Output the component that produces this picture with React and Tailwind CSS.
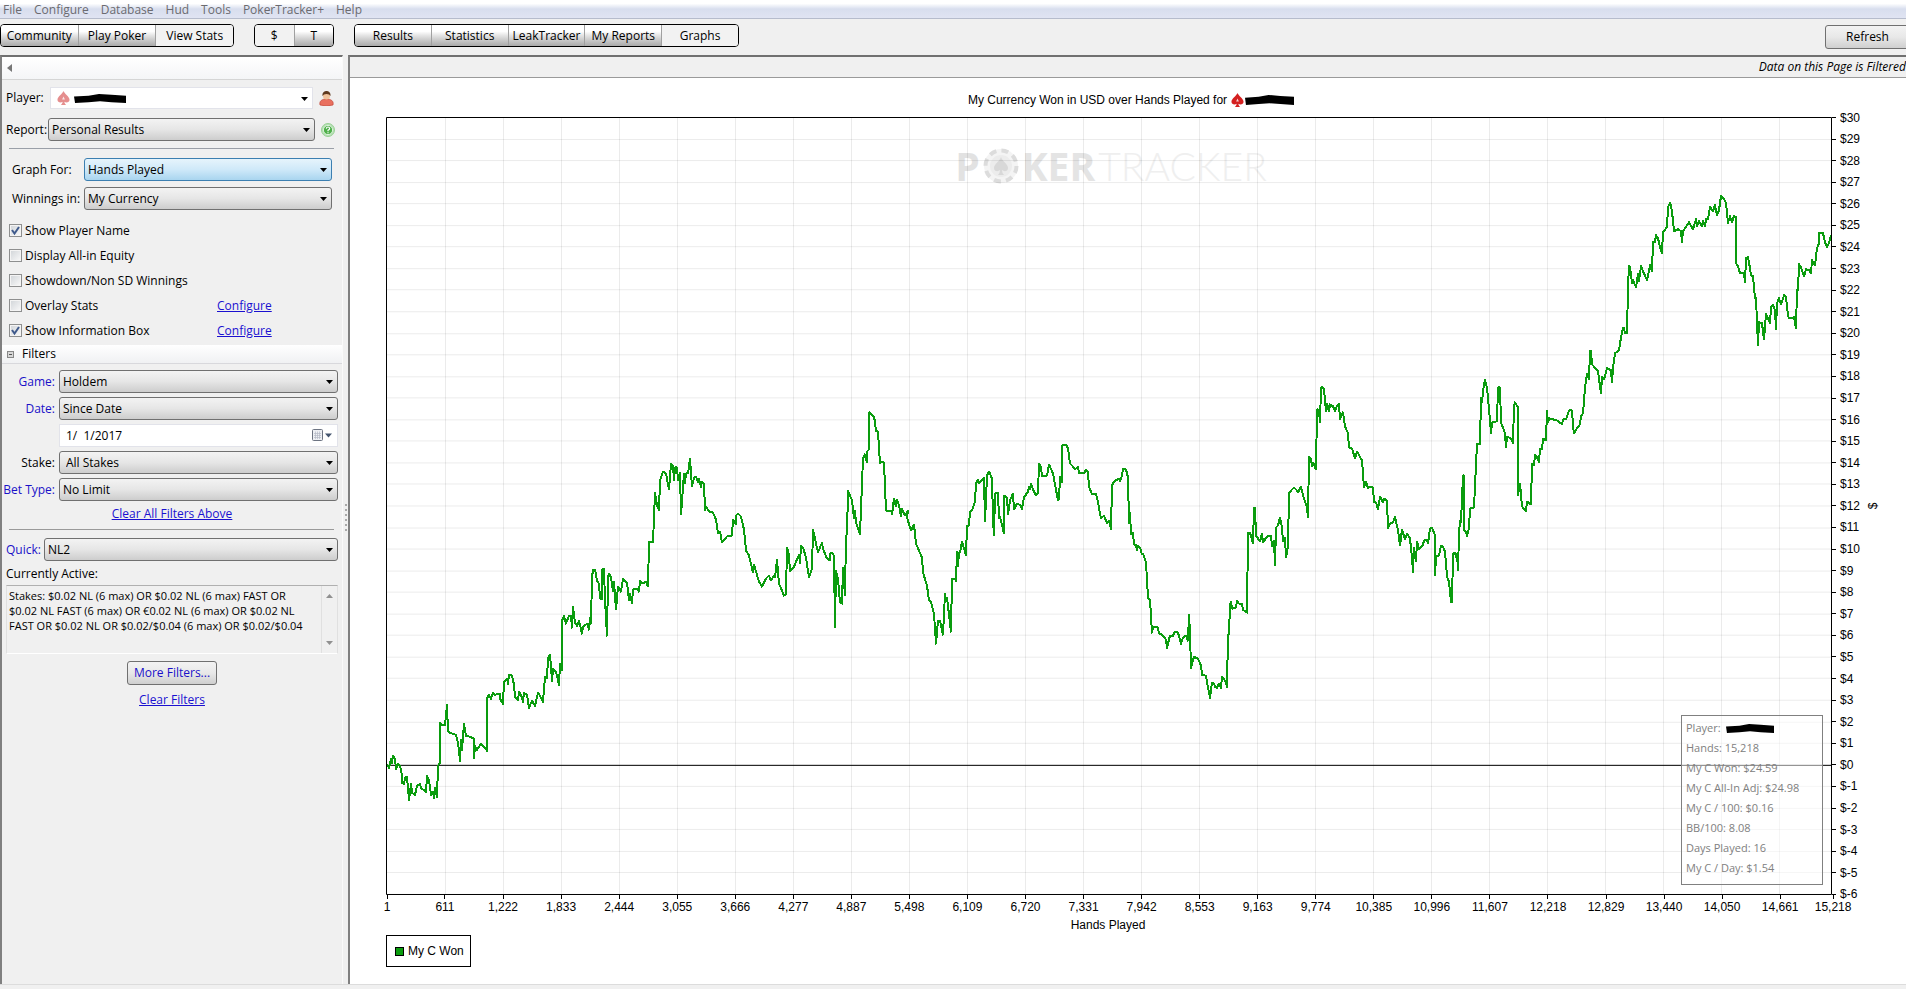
import React from "react";

const menu = ["File", "Configure", "Database", "Hud", "Tools", "PokerTracker+", "Help"];

const yTicks = Array.from({ length: 37 }, (_, i) => 30 - i);
const xTicks = [
    1, 611, 1222, 1833, 2444, 3055, 3666, 4277, 4887, 5498, 6109, 6720, 7331, 7942,
    8553, 9163, 9774, 10385, 10996, 11607, 12218, 12829, 13440, 14050, 14661, 15218,
];

const winnings = `387,764 389,767 391,758 392,762 393,755 395,758 396,768 398,763 400,765 402,775 402,782 404,783 405,777 407,776
409,799 411,783 412,792 415,794 417,785 420,783 421,787 426,791 427,775 429,779 431,794 433,791 434,797 435,787 437,796
438,765 440,762 440,722 442,724 445,724 447,704 448,730 450,732 456,734 458,742 460,760 461,739 462,749 464,723 466,735
470,736 474,738 474,757 475,745 477,749 481,743 485,747 487,750 487,698 489,694 491,698 493,692 495,694 500,693 500,698
503,703 504,681 507,678 508,683 509,674 512,675 514,684 515,696 518,699 519,691 521,694 523,701 524,692 527,694 529,707
532,700 535,705 538,692 540,695 543,701 545,676 547,677 548,658 550,654 552,680 553,668 556,671 559,684 560,663 562,669
562,620 564,615 566,623 569,615 571,615 572,627 573,606 575,622 577,625 579,620 582,633 583,626 587,623 589,629 590,617
591,623 592,577 593,569 595,569 597,580 599,583 600,597 602,599 602,569 604,568 605,600 607,635 608,577 609,573 611,577
613,591 614,581 616,609 618,586 621,591 623,578 627,582 629,600 630,593 632,603 633,589 637,588 639,591 640,580 643,583
646,581 648,586 649,541 653,542 655,492 657,505 659,510 660,480 663,471 666,473 669,489 671,463 673,465 674,480 675,467
677,467 678,480 680,472 681,514 683,487 684,473 685,483 686,473 688,473 690,458 692,486 694,477 696,476 698,482 699,478
701,487 702,481 704,483 705,510 706,506 709,511 713,512 716,519 718,533 720,531 722,542 727,536 732,535 733,519 736,524
736,515 738,513 741,516 744,529 746,550 749,555 753,572 754,564 756,571 759,581 762,586 766,578 769,575 771,580 774,575
775,577 777,559 779,583 782,590 784,595 786,593 787,547 789,555 790,571 794,566 799,554 800,563 801,545 803,547 806,557
809,577 812,568 813,529 818,552 822,542 823,548 827,558 830,560 830,553 832,552 834,555 835,627 836,570 838,578 840,602
842,603 843,567 845,595 846,535 847,534 848,490 852,500 854,518 855,510 856,522 860,534 863,458 865,454 867,462 867,451
869,449 869,413 870,412 874,417 875,421 876,431 878,431 880,463 881,461 884,462 886,510 892,511 892,514 894,498 896,506
897,499 899,505 901,516 902,508 905,515 908,510 907,517 911,530 914,524 916,543 922,557 923,572 927,585 929,600 931,601
934,613 936,643 938,620 940,620 943,634 945,593 946,600 947,597 951,631 952,578 955,578 956,581 957,551 958,566 959,552
960,552 962,541 966,555 967,525 969,525 970,511 972,510 975,501 976,483 978,479 979,483 984,477 985,521 987,475 989,471
992,478 993,519 994,535 995,493 998,492 999,518 1000,516 1004,533 1004,495 1007,497 1008,514 1010,500 1013,493 1014,509
1017,503 1021,505 1022,509 1024,497 1028,491 1029,486 1030,489 1031,483 1033,489 1036,495 1038,492 1039,463 1041,467
1042,476 1047,475 1049,464 1053,473 1058,500 1059,499 1060,476 1062,482 1062,445 1064,445 1066,444 1068,448 1070,463
1073,466 1075,469 1078,466 1079,473 1084,473 1086,469 1088,472 1089,486 1092,494 1096,493 1098,502 1101,518 1104,515
1107,523 1109,520 1111,529 1112,485 1114,481 1119,478 1120,481 1122,475 1123,468 1126,469 1128,477 1129,523 1130,512
1131,534 1133,532 1134,544 1136,544 1137,550 1138,545 1140,547 1142,554 1143,553 1146,562 1148,597 1150,599 1152,632
1153,627 1156,626 1158,627 1159,633 1162,634 1166,639 1167,647 1170,635 1173,635 1175,631 1178,632 1181,643 1183,637
1186,635 1188,640 1189,614 1190,633 1191,667 1194,656 1198,658 1201,665 1202,674 1206,675 1208,687 1210,697 1212,682
1214,683 1215,686 1217,687 1219,683 1221,687 1222,676 1225,680 1227,686 1228,635 1229,633 1230,605 1231,601 1232,608
1236,607 1237,600 1239,603 1242,603 1243,609 1247,612 1248,532 1250,532 1253,543 1254,507 1255,507 1256,535 1260,541
1262,533 1263,542 1267,536 1271,535 1272,546 1274,540 1275,565 1276,527 1278,525 1280,517 1282,527 1283,541 1285,537
1286,557 1288,545 1289,493 1291,490 1294,487 1297,490 1298,492 1301,486 1303,495 1307,507 1308,517 1309,456 1311,458
1312,466 1313,462 1316,469 1317,409 1319,410 1320,422 1321,388 1322,387 1324,389 1326,411 1327,403 1329,411 1330,404
1333,406 1335,411 1337,405 1339,404 1340,419 1343,412 1345,426 1348,433 1349,447 1352,448 1355,458 1357,451 1362,460
1364,487 1366,481 1368,488 1369,486 1373,487 1374,502 1376,502 1378,509 1380,496 1383,502 1384,498 1387,500 1388,528
1390,523 1393,522 1395,516 1398,530 1400,545 1402,529 1405,539 1407,533 1410,538 1412,557 1413,572 1414,547 1416,561
1417,541 1419,549 1423,544 1424,540 1427,539 1428,543 1430,528 1432,527 1435,535 1435,575 1436,556 1439,555 1441,545
1443,546 1445,551 1447,576 1449,581 1451,601 1452,602 1453,553 1455,552 1456,557 1457,553 1458,570 1459,533 1460,520
1461,522 1463,475 1464,475 1464,530 1466,531 1467,536 1469,527 1470,508 1474,507 1477,443 1480,444 1481,397 1482,402
1484,383 1485,380 1487,387 1490,420 1491,433 1492,422 1497,421 1498,387 1500,387 1501,422 1505,433 1506,447 1507,436
1511,438 1513,443 1514,405 1515,402 1518,407 1518,495 1520,483 1522,506 1526,511 1527,501 1531,504 1532,463 1534,465
1535,454 1537,457 1539,462 1540,448 1542,449 1543,438 1546,440 1547,410 1548,422 1549,418 1557,420 1562,424 1563,419
1566,419 1569,410 1572,410 1573,425 1574,433 1577,428 1580,424 1581,416 1583,413 1585,387 1587,374 1589,379 1590,351
1591,351 1592,364 1598,371 1601,393 1602,377 1604,379 1607,368 1611,370 1612,382 1613,367 1615,353 1619,350 1621,337
1623,328 1624,328 1625,333 1627,333 1628,287 1629,266 1630,267 1632,283 1633,280 1636,287 1638,274 1639,281 1641,266
1643,271 1647,280 1650,265 1652,271 1653,242 1655,242 1656,235 1658,238 1660,247 1662,253 1663,232 1667,227 1668,207
1670,203 1671,205 1673,220 1674,231 1678,229 1681,231 1682,242 1683,231 1689,222 1693,229 1696,219 1697,226 1699,221
1702,226 1703,221 1705,226 1706,219 1708,219 1710,207 1713,211 1715,205 1717,215 1719,210 1721,196 1724,199 1726,203
1728,223 1730,216 1732,222 1734,216 1736,217 1736,263 1738,266 1740,273 1744,273 1745,282 1746,258 1748,257 1749,262
1751,275 1753,276 1755,298 1756,298 1758,345 1759,322 1762,323 1764,339 1766,314 1770,323 1771,307 1773,305 1775,310
1776,329 1777,303 1779,298 1781,304 1784,295 1786,297 1788,315 1789,318 1794,317 1796,328 1797,290 1798,290 1799,264
1801,267 1804,276 1806,269 1809,270 1811,273 1812,260 1815,265 1817,248 1819,243 1819,233 1823,233 1825,242 1827,247
1829,243 1831,235`;

const info = [
    "Hands: 15,218",
    "My C Won: $24.59",
    "My C All-In Adj: $24.98",
    "My C / 100: $0.16",
    "BB/100: 8.08",
    "Days Played: 16",
    "My C / Day: $1.54",
];

function Spade({ className, soft }) {
    return (
        <svg viewBox="0 0 14 15" className={className} aria-hidden="true">
            <path d="M7 0C8 3 13.500 6 13.500 9.500C13.500 12.500 9.500 13 8 11.500C8 13 8.800 14 9.800 15H4.200C5.200 14 6 13 6 11.500C4.500 13 0.500 12.500 0.500 9.500C0.500 6 6 3 7 0Z" fill={soft ? "#e58e8e" : "#d42020"} />
            <path d="M7 6L8.500 9H5.500Z" fill="#fff" opacity="0.8" />
        </svg>
    );
}

function Redacted({ className }) {
    return (
        <svg viewBox="0 0 50 11" preserveAspectRatio="none" className={className} aria-hidden="true">
            <path d="M0 3L14 2L24 0L36 1L50 2V11L36 10L25 9L14 10L1 11Z" fill="#000" />
        </svg>
    );
}

function Caret({ className }) {
    return (
        <svg viewBox="0 0 7 4" className={className} aria-hidden="true">
            <path d="M0 0H7L3.500 4Z" fill="currentColor" />
        </svg>
    );
}

function Combo({ id, value, active, indent }) {
    return (
        <div className="relative flex-1 min-w-0">
            <select
                id={id}
                className={`block w-full h-[23px] appearance-none rounded-[3px] border pr-5 leading-5 bg-linear-to-b ${indent ? "pl-[6px]" : "pl-[3px]"} ${
                    active
                        ? "border-[#3c7fb1] from-[#e6f4fc] via-[#cfe9f9] to-[#a9d5ef]"
                        : "border-[#707070] from-[#f3f3f3] via-[#e6e6e6] to-[#cdcdcd]"
                }`}
            >
                <option>{value}</option>
            </select>
            <Caret className="pointer-events-none absolute right-[5px] top-[10px] w-[7px] h-1" />
        </div>
    );
}

function Row({ id, label, value, blue, wide, active, indent }) {
    return (
        <div className="flex items-center">
            <label htmlFor={id} className={`shrink-0 whitespace-nowrap ${wide || "w-[55px] pr-1 flex justify-end"} ${blue ? "text-[#1a10c8]" : ""}`}>
                {label}
            </label>
            <Combo id={id} value={value} active={active} indent={indent} />
        </div>
    );
}

function Check({ id, label, checked, configure }) {
    return (
        <div className="flex items-center h-[25px] pl-[7px]">
            <div className="flex items-center w-[208px] gap-[3px]">
                <span className="relative flex">
                    <input
                        id={id}
                        type="checkbox"
                        defaultChecked={checked}
                        className="peer appearance-none w-[13px] h-[13px] border border-[#8e8f8f] bg-linear-to-br from-[#d0d4d8] to-[#fafafa] shadow-[inset_0_0_0_1px_#f4f4f4]"
                    />
                    <svg viewBox="0 0 13 13" className="pointer-events-none absolute inset-0 w-[13px] h-[13px] hidden peer-checked:block" aria-hidden="true">
                        <path d="M3 6L5.500 9.500L10 3" fill="none" stroke="#3f5a8c" strokeWidth="2" />
                    </svg>
                </span>
                <label htmlFor={id}>{label}</label>
            </div>
            {configure && <a href="#configure" className="text-[#1a10d0] underline">Configure</a>}
        </div>
    );
}

function Segments({ items, active, className }) {
    return (
        <div className={`flex h-[23px] shrink-0 rounded-[4px] border border-black overflow-hidden divide-x divide-[#a0a0a0] ${className}`}>
            {items.map((t) => (
                <button
                    key={t}
                    type="button"
                    className={`flex-1 basis-0 min-w-0 text-center leading-5 whitespace-nowrap ${t === active ? "bg-[#f2f2f2]" : "bg-linear-to-b from-white from-30% via-[#e4e4e4] to-[#a9a9a9]"}`}
                >
                    {t}
                </button>
            ))}
        </div>
    );
}

function Sidebar() {
    return (
        <aside className="w-[343px] shrink-0 border-t-2 border-l-2 border-t-[#707070] border-l-[#808080] border-r border-r-[#fafafa]">
            <div className="h-[23px] flex items-center pl-[5px] border-b border-[#d5d5d5] bg-linear-to-b from-white to-[#f4f5f7]">
                <button type="button" aria-label="Collapse panel">
                    <svg viewBox="0 0 5 8" className="w-[5px] h-2"><path d="M5 0V8L0 4Z" fill="#777" /></svg>
                </button>
            </div>

            <div className="flex items-center pt-[7px] pl-1 pr-2">
                <label htmlFor="player" className="w-11 shrink-0">Player:</label>
                <div className="relative flex-1">
                    <select id="player" className="block w-full h-[22px] appearance-none border border-[#e2e3ea] bg-white">
                        <option></option>
                    </select>
                    <Spade soft className="pointer-events-none absolute left-[7px] top-1 w-[13px] h-[14px]" />
                    <Redacted className="pointer-events-none absolute left-6 top-[7px] w-[52px] h-[9px]" />
                    <Caret className="pointer-events-none absolute right-[5px] top-[10px] w-[7px] h-1" />
                </div>
                <svg viewBox="0 0 15 15" className="w-[15px] h-[15px] ml-[6px]" aria-hidden="true">
                    <path d="M1 14C0 10 3 8 7.500 8S15 10 14 14Q7.500 16 1 14Z" fill="#e9705f" stroke="#c2483a" strokeWidth="0.700" />
                    <circle cx="7.500" cy="5" r="3.500" fill="#f0c39c" />
                    <path d="M3.500 5C3 1 6 0 7.500 0S12 1 11.500 5Q10.500 3 7.500 3T3.500 5Z" fill="#5f3a1f" />
                </svg>
            </div>

            <div className="flex items-center pt-[9px] pl-1 pr-[7px]">
                <label htmlFor="report" className="w-[42px] shrink-0">Report:</label>
                <Combo id="report" value="Personal Results" />
                <svg viewBox="0 0 14 14" className="w-[14px] h-[14px] ml-[6px]" aria-hidden="true">
                    <circle cx="7" cy="7" r="6.500" fill="#b5e0b3" stroke="#9ad097" />
                    <circle cx="7" cy="7" r="4.600" fill="#4fb04b" stroke="#f0faf0" strokeWidth="0.800" />
                    <path d="M5.300 5.600Q5.500 4 7 4T8.700 5.600Q8.700 6.500 7 7.300V8.200M7 9.300V10.300" fill="none" stroke="#fff" strokeWidth="1.200" />
                </svg>
            </div>

            <hr className="mt-[7px] ml-[7px] mr-2 border-[#9a9fa8]" />

            <div className="flex flex-col gap-[6px] pt-[9px] pl-[10px] pr-[10px]">
                <Row id="graph" label="Graph For:" value="Hands Played" wide="w-[72px]" active />
                <Row id="currency" label="Winnings in:" value="My Currency" wide="w-[72px]" />
            </div>

            <div className="pt-2">
                <Check id="c1" label="Show Player Name" checked />
                <Check id="c2" label="Display All-in Equity" />
                <Check id="c3" label="Showdown/Non SD Winnings" />
                <Check id="c4" label="Overlay Stats" configure />
                <Check id="c5" label="Show Information Box" checked configure />
            </div>

            <div className="flex items-center h-[19px] mt-[2px] pl-[5px] gap-2 border-b border-[#d8d8dc] bg-linear-to-b from-white to-[#f0f1f3]">
                <svg viewBox="0 0 7 7" className="w-[7px] h-[7px]" aria-hidden="true">
                    <rect x="0.500" y="0.500" width="6" height="6" fill="#d8d8d8" stroke="#888" />
                    <path d="M2 3.500H5" stroke="#555" />
                </svg>
                <h2>Filters</h2>
            </div>

            <div className="flex flex-col gap-1 pt-[6px] pl-[2px] pr-1">
                <Row id="game" label="Game:" value="Holdem" blue />
                <Row id="date" label="Date:" value="Since Date" blue />
                <div className="relative ml-[55px]">
                    <input type="text" aria-label="Start date" defaultValue="1/  1/2017" className="block w-full h-[23px] bg-white border border-[#e2e3ea] px-[6px] whitespace-pre" />
                    <svg viewBox="0 0 20 12" className="pointer-events-none absolute right-[6px] top-[5px] w-5 h-3" aria-hidden="true">
                        <rect x="0.500" y="0.500" width="10" height="11" rx="1" fill="#eef0f4" stroke="#6d7482" />
                        <path d="M3.500 2.500V10M5.500 2.500V10M7.500 2.500V10M2 4.500H9M2 6.500H9M2 8.500H9" stroke="#b4b9c6" strokeWidth="0.700" />
                        <path d="M13 4.500H20L16.500 8.500Z" fill="#44546e" />
                    </svg>
                </div>
                <Row id="stake" label="Stake:" value="All Stakes" indent />
                <Row id="bet" label="Bet Type:" value="No Limit" blue />
            </div>

            <div className="flex justify-center pt-1 leading-[18px]">
                <a href="#clear-all" className="text-[#1a10d0] underline">Clear All Filters Above</a>
            </div>

            <hr className="mt-[6px] ml-[7px] mr-2 border-[#9a9a9a]" />

            <div className="pt-2 pl-1 pr-1">
                <Row id="quick" label="Quick:" value="NL2" blue wide="w-[38px]" />
                <p className="pt-1 leading-[18px]">Currently Active:</p>
                <div className="flex h-[69px] mt-[2px] border border-[#e0e0e0] border-t-[#b0b0b0] border-b-white">
                    <p className="flex-1 pt-[2px] pl-[2px] leading-[15px] whitespace-pre-line text-[11px]">
                        {"Stakes: $0.02 NL (6 max) OR $0.02 NL (6 max) FAST OR\n$0.02 NL FAST (6 max) OR €0.02 NL (6 max) OR $0.02 NL\nFAST OR $0.02 NL OR $0.02/$0.04 (6 max) OR $0.02/$0.04"}
                    </p>
                    <div className="w-4 flex flex-col items-center justify-between py-2 border-l border-[#e0e0e0] text-[#909090]">
                        <Caret className="w-[7px] h-1 rotate-180" />
                        <Caret className="w-[7px] h-1" />
                    </div>
                </div>
            </div>

            <div className="flex flex-col items-center pt-[7px] pb-6">
                <button type="button" className="w-[90px] h-6 rounded-[3px] border border-[#707070] bg-linear-to-b from-[#f3f3f3] via-[#e8e8e8] to-[#cfcfcf] text-[#1a10c8]">More Filters...</button>
                <a href="#clear" className="mt-[6px] leading-[18px] text-[#1a10d0] underline">Clear Filters</a>
            </div>
        </aside>
    );
}

function Watermark() {
    return (
        <div className="pointer-events-none absolute inset-x-0 top-[27px] flex items-center justify-center gap-[3px] pl-1 h-[44px] text-[39px] leading-[44px] font-['Open_Sans',sans-serif]" aria-hidden="true">
            <span className="font-bold text-[#e2e2e2]">P</span>
            <svg viewBox="0 0 36 36" className="w-9 h-9">
                <circle cx="18" cy="18" r="17" fill="#f4f4f4" />
                <circle cx="18" cy="18" r="15.500" fill="none" stroke="#dcdcdc" strokeWidth="4" strokeDasharray="7 5.170" />
                <circle cx="18" cy="18" r="11" fill="#ececec" />
                <path d="M18 9C19 13 25 16 25 20C25 23.500 21 24 19 22Q19 25 21 27H15Q17 25 17 22C15 24 11 23.500 11 20C11 16 17 13 18 9Z" fill="#d8d8d8" />
            </svg>
            <span className="font-bold text-[#e4e4e4]">KER</span>
            <span className="font-light text-[#efefef] font-['Lato',sans-serif]">TRACKER</span>
        </div>
    );
}

function Chart() {
    return (
        <section className="flex-1 flex flex-col bg-white pl-9 font-['Liberation_Sans',Arial,sans-serif] text-black">
            <h1 className="flex items-center justify-center h-[39px] pt-1 pr-[30px]">
                My Currency Won in USD over Hands Played for
                <Spade className="ml-1 w-[13px] h-[14px]" />
                <Redacted className="ml-px w-[49px] h-[10px]" />
            </h1>

            <div className="flex-1 flex min-h-[480px]">
                <div className="relative flex-1 min-w-0 flex">
                    <Watermark />
                    <svg viewBox="386 117 1446 777" preserveAspectRatio="none" className="relative flex-1 min-w-0" role="img" aria-label="My C Won over hands played">
                        <g stroke="#000" strokeOpacity="0.080" shapeRendering="crispEdges">
                            {yTicks.slice(1, -1).map((v) => {
                                const y = Math.round(117 + (30 - v) * 21.556) + 0.5;
                                return <line key={v} x1="387" x2="1831" y1={y} y2={y} vectorEffect="non-scaling-stroke" />;
                            })}
                            {xTicks.slice(1, -1).map((v, i) => (
                                <line key={v} x1={445.5 + i * 58} x2={445.5 + i * 58} y1="118" y2="893" vectorEffect="non-scaling-stroke" />
                            ))}
                        </g>
                        <path d="M387 764.500H1831" stroke="#000" shapeRendering="crispEdges" vectorEffect="non-scaling-stroke" />
                        <polyline points={winnings} fill="none" stroke="#0a9c0e" strokeWidth="2" strokeLinejoin="round" shapeRendering="crispEdges" vectorEffect="non-scaling-stroke" />
                        <path d="M386.500 117.500H1831.500V893.500H386.500Z" fill="none" stroke="#000" shapeRendering="crispEdges" vectorEffect="non-scaling-stroke" />
                    </svg>
                    <div className="absolute right-[9px] bottom-[10px] w-[142px] h-[170px] border border-[#808080] bg-white/50 pt-[2px] pl-1 leading-5 text-[#808080] font-['Open_Sans',sans-serif] text-[11px]">
                        <p className="flex items-center gap-[5px]">Player: <Redacted className="w-12 h-[9px]" /></p>
                        {info.map((t) => <p key={t}>{t}</p>)}
                    </div>
                </div>

                <div className="w-9 shrink-0 flex flex-col justify-between">
                    {yTicks.map((v) => (
                        <div key={v} className="h-px flex items-center gap-1">
                            <span className="w-1 h-px bg-black" />
                            <span>${v}</span>
                        </div>
                    ))}
                </div>
                <div className="w-[38px] shrink-0 flex items-center pl-[2px]"><span className="-rotate-90">$</span></div>
            </div>

            <div className="flex pr-[74px] h-[22px]">
                {xTicks.map((v, i) => (
                    <div key={v} className="basis-0 min-w-0" style={{ flexGrow: i < xTicks.length - 1 ? xTicks[i + 1] - v : 0 }}>
                        <div className="w-[2px] flex flex-col items-center">
                            <span className="w-px h-1 bg-black shrink-0" />
                            <span className="leading-4">{v.toLocaleString("en-US")}</span>
                        </div>
                    </div>
                ))}
            </div>
            <p className="text-center pr-[76px] leading-4">Hands Played</p>

            <div className="self-start flex items-center gap-1 mt-[2px] mb-[17px] h-8 w-[85px] pl-2 border border-black whitespace-nowrap">
                <span className="w-[9px] h-[9px] border border-black bg-[#0a9c0e]" />
                My C Won
            </div>
        </section>
    );
}

export default function App() {
    return (
        <div className="min-h-screen flex flex-col overflow-hidden bg-[#f0f0f0] text-black text-[12px] leading-4 font-['Open_Sans','Noto_Sans',sans-serif]">
            <nav className="flex items-center h-[19px] gap-3 pt-[2px] pl-[3px] border-b border-[#b6bccc] bg-linear-to-b from-white from-20% via-[#d8deee] via-50% to-[#e0e4f2]">
                {menu.map((m) => (
                    <button key={m} type="button" className="text-[#6b6b70]">{m}</button>
                ))}
            </nav>

            <div className="flex h-9 pt-[5px] gap-5">
                <Segments items={["Community", "Play Poker", "View Stats"]} active="View Stats" className="w-[234px]" />
                <Segments items={["$", "T"]} active="$" className="w-20" />
                <Segments items={["Results", "Statistics", "LeakTracker", "My Reports", "Graphs"]} active="Graphs" className="w-[385px]" />
                <button type="button" className="ml-auto -mr-1 mt-px w-[85px] h-6 rounded-[3px] border border-[#707070] bg-linear-to-b from-[#f3f3f3] via-[#e8e8e8] to-[#cfcfcf]">Refresh</button>
            </div>

            <div className="flex-1 flex">
                <Sidebar />
                <div className="w-[5px] shrink-0 flex flex-col items-center justify-center gap-[3px] pb-1">
                    {[0, 1, 2, 3, 4, 5].map((d) => <span key={d} className="w-[2px] h-[2px] bg-[#a8a8a8]" />)}
                </div>
                <main className="flex-1 min-w-0 flex flex-col border-t-2 border-l-2 border-t-[#707070] border-l-[#808080]">
                    <div className="flex justify-end h-[21px] border-b border-[#9a9a9a]">
                        <p className="leading-5 italic whitespace-nowrap">Data on this Page is Filtered</p>
                    </div>
                    <Chart />
                </main>
            </div>
            <div className="h-[5px] border-t border-[#dcdcdc]" />
        </div>
    );
}
